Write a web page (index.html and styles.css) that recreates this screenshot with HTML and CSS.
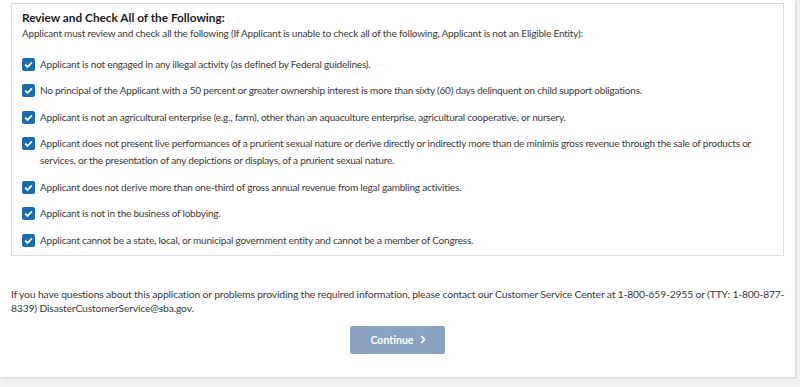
FILE: index.html
```html
<!DOCTYPE html>
<html lang="en">
<head>
  <meta charset="UTF-8" />
  <title>Eligibility</title>
  <link rel="stylesheet" href="styles.css">
</head>
<body>
  <div class="page">
    <div class="review-box">
      <h2 class="review-title">Review and Check All of the Following:</h2>
      <p class="review-sub">Applicant must review and check all the following (If Applicant is unable to check all of the following, Applicant is not an Eligible Entity):</p>

      <ul class="check-list">
        <li class="check-item"><span class="box"></span><span>Applicant is not engaged in any illegal activity (as defined by Federal guidelines).</span></li>
        <li class="check-item"><span class="box"></span><span>No principal of the Applicant with a 50 percent or greater ownership interest is more than sixty (60) days delinquent on child support obligations.</span></li>
        <li class="check-item"><span class="box"></span><span>Applicant is not an agricultural enterprise (e.g., farm), other than an aquaculture enterprise, agricultural cooperative, or nursery.</span></li>
        <li class="check-item"><span class="box"></span><span>Applicant does not present live performances of a prurient sexual nature or derive directly or indirectly more than de minimis gross revenue through the sale of products or services, or the presentation of any depictions or displays, of a prurient sexual nature.</span></li>
        <li class="check-item"><span class="box"></span><span>Applicant does not derive more than one-third of gross annual revenue from legal gambling activities.</span></li>
        <li class="check-item"><span class="box"></span><span>Applicant is not in the business of lobbying.</span></li>
        <li class="check-item"><span class="box"></span><span>Applicant cannot be a state, local, or municipal government entity and cannot be a member of Congress.</span></li>
      </ul>
    </div>

    <p class="contact">If you have questions about this application or problems providing the required information, please contact our Customer Service Center at 1-800-659-2955 or (TTY: 1-800-877-8339) DisasterCustomerService@sba.gov.</p>

    <div class="actions">
      <button class="btn-continue" disabled>
        Continue
        <svg class="chev" width="6" height="9" viewBox="0 0 6 9"><path d="M1.2 1l3.3 3.5-3.3 3.5" fill="none" stroke="#fff" stroke-width="1.7"/></svg>
      </button>
    </div>
  </div>
</body>
</html>
```

FILE: styles.css
```css
* {
  box-sizing: border-box;
}

body {
  margin: 0;
  background: #f1f1f1;
  font-family: "Lato", "Open Sans", sans-serif;
  color: #3a3a3a;
  height: 387px;
  overflow: hidden;
}

.page {
  width: 795px;
  height: 377px;
  background: #fff;
  padding: 3px 11px 0 11px;
  box-shadow: 1px 1px 2px rgba(0, 0, 0, 0.15);
}

.review-box {
  border: 1px solid #dedede;
  padding: 5px 10px 6px 10px;
}

.review-title {
  margin: 0;
  font-size: 11.8px;
  font-weight: 700;
  color: #1b1b1b;
  line-height: 18px;
}

.review-sub {
  margin: 0 0 15.5px;
  font-size: 10px;
  letter-spacing: -0.2px;
  line-height: 13px;
}

.check-list {
  list-style: none;
  margin: 0;
  padding: 0;
}

.check-item {
  display: flex;
  align-items: flex-start;
  gap: 5px;
  font-size: 10px;
  letter-spacing: -0.2px;
  line-height: 17px;
  margin-bottom: 9.5px;
}

.check-item:last-child {
  margin-bottom: 0;
}

.box {
  flex: none;
  width: 13px;
  height: 13px;
  margin-top: 2px;
  border-radius: 2px;
  background: #1b6bab url("data:image/svg+xml,%3Csvg xmlns='http://www.w3.org/2000/svg' viewBox='0 0 13 13'%3E%3Cpath d='M3.2 6.7l2.3 2.3L9.9 4.4' fill='none' stroke='white' stroke-width='1.8'/%3E%3C/svg%3E") center / 13px 13px no-repeat;
}

.contact {
  margin: 31px -5px 0 0;
  font-size: 10.35px;
  letter-spacing: -0.16px;
  line-height: 14px;
}

.actions {
  display: flex;
  justify-content: center;
  margin-top: 11px;
}

.btn-continue {
  display: flex;
  align-items: center;
  justify-content: center;
  gap: 7px;
  width: 95px;
  height: 28px;
  padding: 0 0 0 2px;
  border: none;
  border-radius: 2px;
  background: #8aa1bf;
  color: #fff;
  font-family: inherit;
  font-size: 10.5px;
  font-weight: 700;
}
```
